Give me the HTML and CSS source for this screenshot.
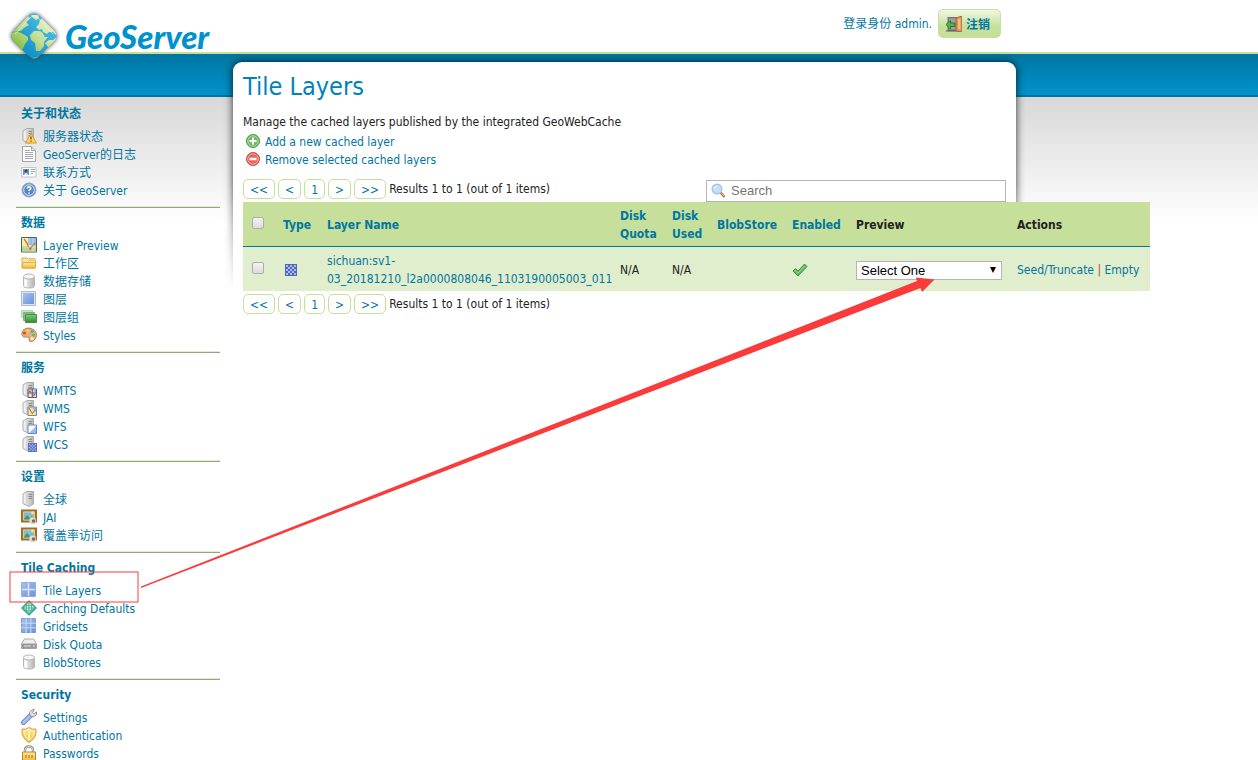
FILE: index.html
```
<!DOCTYPE html>
<html lang="zh-CN">
<head>
<meta charset="utf-8">
<title>GeoServer: Tile Layers</title>
<link rel="stylesheet" href="styles.css">
</head>
<body>
<svg class="sprite" aria-hidden="true">
  <defs>
    <linearGradient id="gray" x1="0" x2="1"><stop offset="0" stop-color="#fafafa"/><stop offset="1" stop-color="#b4b4b4"/></linearGradient>
    <linearGradient id="blue" x1="0" y1="0" x2="1" y2="1"><stop offset="0" stop-color="#a9c2ee"/><stop offset="1" stop-color="#6d92d8"/></linearGradient>
    <linearGradient id="gold" x1="0" y1="0" x2="0" y2="1"><stop offset="0" stop-color="#fdeb9c"/><stop offset="1" stop-color="#eebc3a"/></linearGradient>
    <linearGradient id="green" x1="0" y1="0" x2="0" y2="1"><stop offset="0" stop-color="#86cc7c"/><stop offset="1" stop-color="#2f8a33"/></linearGradient>
    <linearGradient id="land" gradientUnits="userSpaceOnUse" x1="40" y1="8" x2="12" y2="40"><stop offset="0" stop-color="#e6f0c8"/><stop offset=".5" stop-color="#c6e09b"/><stop offset="1" stop-color="#86be3a"/></linearGradient>
    <linearGradient id="sea" gradientUnits="userSpaceOnUse" x1="27" y1="4" x2="27" y2="50"><stop offset="0" stop-color="#53bfe5"/><stop offset="1" stop-color="#078ac2"/></linearGradient>
    <clipPath id="gem"><rect x="9" y="9" width="36" height="36" rx="7" transform="rotate(45 27 27)"/></clipPath>
  </defs>
  <symbol id="server" viewBox="0 0 16 16"><path d="M2 3 6 .5h6.500v12.500L8 15.500 2 12.500z" fill="url(#gray)" stroke="#aaa"/><path d="M6 1v14" stroke="#ccc"/><path d="M7.500 3.500H11M7.500 5.500H11M7.500 7.500H11" stroke="#888"/></symbol>
  <symbol id="status" viewBox="0 0 16 16"><use href="#server"/><path d="M10 5.500 15.500 15h-11z" fill="#ffd765" stroke="#d99b2b"/><path d="M10 8.500v3M10 12.500v1.200" stroke="#76500d" stroke-width="1.300"/></symbol>
  <symbol id="page" viewBox="0 0 16 16"><path d="M1.500.5h9l4 4v11h-13z" fill="#fcfcfc" stroke="#a6a6a6"/><path d="M10.500.5v4h4" fill="#ddd" stroke="#a6a6a6"/><path d="M4 4.500h5M4 6.500h8M4 8.500h8M4 10.500h8M4 12.500h8" stroke="#aaa"/></symbol>
  <symbol id="vcard" viewBox="0 0 16 16"><path d="M.5 3.500h14.500v9.500H.5z" fill="#fff" stroke="#bfc5cb"/><path d="M2 5h6v6H2z" fill="#5e98dc"/><circle cx="5" cy="7" r="1.500" fill="#613b24"/><path d="M3 11q2-4 4 0" fill="#eee"/><path d="M9.500 5.500H14M9.500 7.500H14M9.500 9.500H12" stroke="#8cacce"/></symbol>
  <symbol id="help" viewBox="0 0 16 16"><circle cx="8" cy="8" r="7" fill="#6c93c8" stroke="#89a8d0"/><circle cx="8" cy="8" r="5.300" fill="#5886c3" stroke="#d5e2f3"/><path d="M6.200 6.500q.2-1.700 1.900-1.700 1.800.1 1.700 1.500-.2 1-1.300 1.600-.5.300-.5 1.100M8 10.500v1.300" fill="none" stroke="#fff" stroke-width="1.500"/></symbol>
  <symbol id="map" viewBox="0 0 16 16"><path d="M.5.5h15v14.500H.5z" fill="#f4eea0" stroke="#4f6456"/><path d="M7 1h8v7H7z" fill="#8fbdec"/><path d="M1 9l6 0 8-1v6.500H1z" fill="#b8d594"/><path d="M3 2l3 4 3 7M9 12l5-6" fill="none" stroke="#e14a34" stroke-width="1.200"/><path d="M8 1v13M12 1v13M1 10h14" stroke="#eef4dc" stroke-width=".5"/></symbol>
  <symbol id="folder" viewBox="0 0 16 16"><path d="M1 13V3h5l1.500 2H14.500v8z" fill="#fbe8a1" stroke="#dfac43"/><path d="M1 13 2 7.500h13L14 13z" fill="url(#gold)" stroke="#e0ae44"/><path d="M8 3.500h6.500" stroke="#e5bd62"/></symbol>
  <symbol id="store" viewBox="0 0 16 16"><path d="M2.500 4v8.500q0 2.500 5.500 2.500t5.500-2.500V4" fill="url(#gray)" stroke="#b5b5b5"/><ellipse cx="8" cy="3.500" rx="5.500" ry="2.500" fill="#f6f6f6" stroke="#b5b5b5"/><path d="M5 7v7" stroke="#fff" stroke-width="2"/></symbol>
  <symbol id="layer" viewBox="0 0 16 16"><path d="M.5.500h14v14H.5z" fill="#dfe9fa" stroke="#a5b9e0"/><path d="M2 2h11v11H2z" fill="url(#blue)"/></symbol>
  <symbol id="group" viewBox="0 0 16 16"><path d="M.5 1.500h11v7H.5z" fill="#cce5c7" stroke="#b5d6b3"/><path d="M2.500 3.500h11v8h-11z" fill="#86bd83" stroke="#79b07a"/><path d="M4.500 5.500h11v8h-11z" fill="url(#green)" stroke="#438d47"/></symbol>
  <symbol id="palette" viewBox="0 0 16 16"><path d="M1 8C0 3 5 0 10 1.500S17 8 14 12s-6 3-6 1 1-3-1-3-5 1-6-2z" fill="#e3b27a" stroke="#b97f48"/><circle cx="3.500" cy="6" r="1.600" fill="#e04c36"/><circle cx="7" cy="4" r="1.600" fill="#f0d250"/><circle cx="11" cy="4.500" r="1.600" fill="#5f9fe0"/><circle cx="12.500" cy="8" r="1.500" fill="#72b44f"/><circle cx="11" cy="11.500" r="1.500" fill="#fff3dc"/></symbol>
  <symbol id="wmts" viewBox="0 0 16 16"><use href="#server"/><path d="M7 7h8.500v8.500H7z" fill="#eee99b" stroke="#4a57a8"/><path d="M11 7h4v4z" fill="#8cb4ed"/><path d="M7 11h8.500M11.300 7v8" stroke="#4a57a8"/><path d="M8 9l2 1M12 14l2-2" stroke="#e45133" stroke-width="1.500"/></symbol>
  <symbol id="wms" viewBox="0 0 16 16"><use href="#server"/><path d="M7 7h8.500v8.500H7z" fill="#f1e88c" stroke="#6f82bf"/><path d="M11 7.500h4v5z" fill="#8db6ee"/><path d="M8 8l3 5M11 14l3-4" stroke="#e45133"/></symbol>
  <symbol id="wfs" viewBox="0 0 16 16"><use href="#server"/><path d="M7 7h8.500v8.500H7z" fill="#fff" stroke="#6682cc"/><path d="M15 8v7H8z" fill="#9ebbf0"/></symbol>
  <symbol id="checker" viewBox="0 0 12 12"><path d="M0 0h12v12H0z" fill="#4f66bd"/><path d="M1 2h10M1 6h10M1 10h10" stroke="#a9bdf0" stroke-width="2" stroke-dasharray="2 2"/><path d="M3 4h8M3 8h8" stroke="#a9bdf0" stroke-width="2" stroke-dasharray="2 2"/></symbol>
  <symbol id="wcs" viewBox="0 0 16 16"><use href="#server"/><use href="#checker" x="7" y="7" width="9" height="9"/></symbol>
  <symbol id="jai" viewBox="0 0 16 16"><path d="M1 1.500h14v11H1z" fill="#7dbbeb" stroke="#a56b22" stroke-width="2"/><path d="M2.500 3h11v8h-11z" fill="none" stroke="#e5cb83"/><path d="M3 10l3-4 3 3 2-2 2 3.500H3z" fill="#4b9850"/><circle cx="11.500" cy="4" r="1.400" fill="#ffe569"/><circle cx="11.500" cy="11.500" r="3.300" fill="#ddd" stroke="#bbb" stroke-dasharray="1.500 1"/><circle cx="12.500" cy="12" r="1.700" fill="#8f6534"/></symbol>
  <symbol id="tiles" viewBox="0 0 16 16"><path d="M.5.500h14v14H.5z" fill="url(#blue)" stroke="#95aee0"/><path d="M7.500 1v13M1 7.500h13" stroke="#dce7fb" stroke-width="1.500"/></symbol>
  <symbol id="globe" viewBox="0 0 16 16"><path d="M8 .7 15.500 8 8 15.300.5 8z" fill="#48baa2" stroke="#268a82" stroke-linejoin="round"/><path d="M8 2l5 5-5 6-5-5z" fill="#d9e9ad"/><path d="M5.500 3v10M8 1v14M10.500 3v10M3 5.500h10M1 8h14M3 10.500h10" stroke="#2fb0b4" stroke-width=".7"/></symbol>
  <symbol id="grid" viewBox="0 0 16 16"><path d="M.5.500h14v14H.5z" fill="url(#blue)" stroke="#7c99d5"/><path d="M5.200 0v15M9.800 0v15M0 5.200h15M0 9.800h15" stroke="#c9d8f7"/></symbol>
  <symbol id="disk" viewBox="0 0 16 16"><path d="M3.500 3h9l3 4.500v5H.5v-5z" fill="#eee" stroke="#aaa"/><path d="M1 7.500h14v5H1z" fill="#999"/><path d="M3 10h7" stroke="#ddd"/><path d="M12 10h1.500" stroke="#fff"/></symbol>
  <symbol id="wrench" viewBox="0 0 16 16"><path d="M2.500 13.500 10 6" stroke="#6d8ac6" stroke-width="5" stroke-linecap="round"/><path d="M2.500 13.500 8.500 7.500" stroke="#a8c1ef" stroke-width="3" stroke-linecap="round"/><path d="M9 7 8.500 3.500 11 .8l2.500 0-2 2.500 1.500 1.500 2.500-2v2.700L12.500 8z" fill="#ddd" stroke="#929292"/></symbol>
  <symbol id="shield" viewBox="0 0 16 16"><path d="M1 2q4 1 7-1.500 3 2.500 7 1.500 1 9-7 13.500Q0 11 1 2z" fill="url(#gold)" stroke="#d9a22e"/><path d="M3 4q3 0 5-1.500 2 1.500 5 1.500 0 6-5 9.500Q3 10 3 4z" fill="none" stroke="#fff5c7"/><path d="M8 4v8" stroke="#fff3b0" stroke-width="2"/></symbol>
  <symbol id="lock" viewBox="0 0 16 16"><path d="M4 8V5q0-3.500 4-3.500T12 5v3" fill="none" stroke="#888" stroke-width="2.400"/><path d="M4 8V5q0-3.500 4-3.500T12 5v3" fill="none" stroke="#ddd"/><path d="M1.500 7h13v8.500h-13z" fill="url(#gold)" stroke="#bb842c"/><path d="M4 10h2v3H4zM7 10h2v3H7zM10 10h2v3h-2z" fill="#d89b35"/></symbol>
  <symbol id="add" viewBox="0 0 16 16"><circle cx="8" cy="8" r="6.500" fill="#4fa24b" stroke="#4f9a4c"/><circle cx="8" cy="8" r="5.300" fill="#6fba62" stroke="#b9deb1"/><path d="M8 4.500v7M4.500 8h7" stroke="#fff" stroke-width="2"/></symbol>
  <symbol id="remove" viewBox="0 0 16 16"><circle cx="8" cy="8" r="6.500" fill="#d6423b" stroke="#cf4e48"/><circle cx="8" cy="8" r="5.300" fill="#e8675c" stroke="#f3b7b0"/><path d="M4.500 8h7" stroke="#fff" stroke-width="2.500"/></symbol>
  <symbol id="search" viewBox="0 0 16 16"><path d="M9.500 9.500 13.500 14" stroke="#b87942" stroke-width="2.600"/><path d="M10.500 10.500 13 13" stroke="#e9b47c"/><circle cx="6" cy="6" r="4.800" fill="#c5dff8" stroke="#a9c5e6" stroke-width="1.400"/><path d="M3.500 5.500q.5-2 2.500-2" fill="none" stroke="#fff"/></symbol>
  <symbol id="tick" viewBox="0 0 16 16"><path d="M1 9l2.500-2.500L6 9l6.500-7L15 4.500 6 14z" fill="#66b95f" stroke="#3c8f45" stroke-linejoin="round"/><path d="M3 8.500 6 11l6.500-7" fill="none" stroke="#9cd990"/></symbol>
  <symbol id="door" viewBox="0 0 16 16"><path d="M1.500 1H11v14H1.500z" fill="#777"/><path d="M3 2.500h7v11H3z" fill="#a1a1a1"/><path d="M0 15h11" stroke="#555"/><path d="M10 2l6-2v16l-6-1z" fill="#d9935b" stroke="#a96534"/><path d="M12 3l2.500-.7v11.500L12 13z" fill="#efbd87"/><path d="M0 8.500 4.500 4.500V7H9v3.500H4.500V13z" fill="#55b34c" stroke="#247b2b"/></symbol>
</svg>

<header class="header">
  <div class="wrap header-inner">
    <a class="brand" href="#">
      <svg class="brand-mark" viewBox="0 0 54 54" aria-hidden="true">
        <rect x="9" y="9" width="36" height="36" rx="7" transform="rotate(45 27 27)" fill="url(#sea)"/>
        <g clip-path="url(#gem)" fill="url(#land)">
          <path d="M5 23 20 6l3 3-4 4 3 3-5 3-3 3z"/>
          <path d="M2 26l5-3 5 0 4 2 5 3 0 3-3 4-2 5-3 1z"/>
          <path d="M23 26l4-4 5 0 3 1 3 5 3 0-4 5 0 4-4 5-4 0-1-8-4-3z"/>
          <path d="M29 18l3-3 1-4 4-3 15 16-2 3-4-4-4 0-2 2-4-2-1-3-3 1z"/>
          <path d="M38 34l4-3 4 0 4-3 1 1-9 10zM20 48l5 1 7-1 0 3-6 2zM24 6l7 0 1 3-3 2-3-2z"/>
        </g>
        <path d="M8 25 24 8q3-3 6 0l16 17" fill="none" stroke="#f3fae8" stroke-opacity=".6"/>
      </svg>
      <span class="brand-name">GeoServer</span>
    </a>
    <form class="login">
      <span>登录身份 admin.</span>
      <button class="logout" type="button"><svg class="icon" aria-hidden="true"><use href="#door"/></svg>注销</button>
    </form>
  </div>
</header>
<div class="band"></div>

<div class="backdrop">
  <div class="wrap columns">
    <nav class="sidebar">
      <section class="menu"><h2>关于和状态</h2><ul>
        <li><a href="#"><svg class="icon"><use href="#status"/></svg>服务器状态</a></li>
        <li><a href="#"><svg class="icon"><use href="#page"/></svg>GeoServer的日志</a></li>
        <li><a href="#"><svg class="icon"><use href="#vcard"/></svg>联系方式</a></li>
        <li><a href="#"><svg class="icon"><use href="#help"/></svg>关于 GeoServer</a></li></ul></section>
      <section class="menu"><h2>数据</h2><ul>
        <li><a href="#"><svg class="icon"><use href="#map"/></svg>Layer Preview</a></li>
        <li><a href="#"><svg class="icon"><use href="#folder"/></svg>工作区</a></li>
        <li><a href="#"><svg class="icon"><use href="#store"/></svg>数据存储</a></li>
        <li><a href="#"><svg class="icon"><use href="#layer"/></svg>图层</a></li>
        <li><a href="#"><svg class="icon"><use href="#group"/></svg>图层组</a></li>
        <li><a href="#"><svg class="icon"><use href="#palette"/></svg>Styles</a></li></ul></section>
      <section class="menu"><h2>服务</h2><ul>
        <li><a href="#"><svg class="icon"><use href="#wmts"/></svg>WMTS</a></li>
        <li><a href="#"><svg class="icon"><use href="#wms"/></svg>WMS</a></li>
        <li><a href="#"><svg class="icon"><use href="#wfs"/></svg>WFS</a></li>
        <li><a href="#"><svg class="icon"><use href="#wcs"/></svg>WCS</a></li></ul></section>
      <section class="menu"><h2>设置</h2><ul>
        <li><a href="#"><svg class="icon"><use href="#server"/></svg>全球</a></li>
        <li><a href="#"><svg class="icon"><use href="#jai"/></svg>JAI</a></li>
        <li><a href="#"><svg class="icon"><use href="#jai"/></svg>覆盖率访问</a></li></ul></section>
      <section class="menu"><h2>Tile Caching</h2><ul>
        <li><a href="#"><svg class="icon"><use href="#tiles"/></svg>Tile Layers</a></li>
        <li><a href="#"><svg class="icon"><use href="#globe"/></svg>Caching Defaults</a></li>
        <li><a href="#"><svg class="icon"><use href="#grid"/></svg>Gridsets</a></li>
        <li><a href="#"><svg class="icon"><use href="#disk"/></svg>Disk Quota</a></li>
        <li><a href="#"><svg class="icon"><use href="#store"/></svg>BlobStores</a></li></ul></section>
      <section class="menu"><h2>Security</h2><ul>
        <li><a href="#"><svg class="icon"><use href="#wrench"/></svg>Settings</a></li>
        <li><a href="#"><svg class="icon"><use href="#shield"/></svg>Authentication</a></li>
        <li><a href="#"><svg class="icon"><use href="#lock"/></svg>Passwords</a></li></ul></section>
    </nav>

    <main class="card">
      <h1>Tile Layers</h1>
      <p class="intro">Manage the cached layers published by the integrated GeoWebCache</p>
      <ul class="actions">
        <li><a href="#"><svg class="icon"><use href="#add"/></svg>Add a new cached layer</a></li>
        <li><a href="#"><svg class="icon"><use href="#remove"/></svg>Remove selected cached layers</a></li>
      </ul>
      <div class="toolbar">
        <div class="pager">
          <a href="#">&lt;&lt;</a><a href="#">&lt;</a><a href="#">1</a><a href="#">&gt;</a><a href="#">&gt;&gt;</a>
          <span>Results 1 to 1 (out of 1 items)</span>
        </div>
        <label class="search"><svg class="icon" aria-hidden="true"><use href="#search"/></svg><input type="text" placeholder="Search" aria-label="Search"></label>
      </div>
      <table class="layers">
        <colgroup><col class="c-check"><col class="c-type"><col class="c-name"><col class="c-quota"><col class="c-used"><col class="c-blob"><col class="c-enabled"><col class="c-preview"><col class="c-actions"></colgroup>
        <thead><tr>
          <th><input type="checkbox" aria-label="Select all layers"></th>
          <th><a href="#">Type</a></th><th><a href="#">Layer Name</a></th><th><a href="#">Disk Quota</a></th><th><a href="#">Disk Used</a></th><th><a href="#">BlobStore</a></th><th><a href="#">Enabled</a></th><th>Preview</th><th>Actions</th>
        </tr></thead>
        <tbody><tr>
          <td><input type="checkbox" aria-label="Select layer"></td>
          <td><svg class="type-icon" role="img" aria-label="Raster"><use href="#checker"/></svg></td>
          <td><a href="#">sichuan:sv1-<wbr>03_20181210_l2a0000808046_1103190005003_011</a></td>
          <td>N/A</td><td>N/A</td><td></td>
          <td><svg class="icon" role="img" aria-label="Enabled"><use href="#tick"/></svg></td>
          <td><span class="picker"><select aria-label="Preview"><option>Select One</option></select></span></td>
          <td class="ops"><a href="#">Seed/Truncate</a> | <a href="#">Empty</a></td>
        </tr></tbody>
      </table>
      <div class="pager pager-bottom">
        <a href="#">&lt;&lt;</a><a href="#">&lt;</a><a href="#">1</a><a href="#">&gt;</a><a href="#">&gt;&gt;</a>
        <span>Results 1 to 1 (out of 1 items)</span>
      </div>
    </main>
  </div>
</div>

<svg class="annotation" width="940" height="610" viewBox="0 0 940 610" aria-hidden="true">
  <rect x="10" y="572" width="128" height="30" fill="none" stroke="#fb3a3a"/>
  <path d="M141 586.500 917 281l-1-3.500 18.500 2L922 292l-1.500-4L141 588z" fill="#fb3a3a"/>
</svg>
</body>
</html>
```
FILE: styles.css
```
* { box-sizing: border-box; }

body {
  margin: 0;
  position: relative;
  background: #fff;
  color: #222;
  font: 12px/18px "DejaVu Sans Condensed", "Noto Sans", "Noto Sans CJK SC", sans-serif;
}

a { color: #0076a1; text-decoration: none; }
ul { list-style: none; margin: 0; padding: 0; }
.sprite { position: absolute; width: 0; height: 0; }
.icon { width: 16px; height: 16px; flex: none; }
.wrap { max-width: 1016px; }

.header { height: 54px; border-bottom: 2px solid #c6e09b; }
.header-inner {
  display: flex;
  justify-content: space-between;
  align-items: flex-start;
  padding: 9px 15px 0 7px;
}
.brand { display: flex; align-items: flex-start; gap: 4px; position: relative; z-index: 2; }
.brand-mark { width: 54px; height: 54px; filter: drop-shadow(0 0 2px #444); }
.brand-name {
  color: #0092cc;
  font: italic 900 33px/54px Lato, sans-serif;
}
.login { display: flex; align-items: center; gap: 6px; color: #0076a1; }
.logout {
  display: flex;
  align-items: center;
  gap: 4px;
  height: 29px;
  padding: 0 10px 0 7px;
  border: 1px solid #c6e09b;
  border-radius: 5px;
  background: linear-gradient(#f0f7e3, #c6e09b 60%);
  color: #0076a1;
  font: bold 12px/18px "Noto Sans CJK SC", sans-serif;
}

.band {
  height: 43px;
  border-bottom: 2px solid #0076a1;
  background: linear-gradient(#0076a1, #0092cc);
}
.backdrop { background: linear-gradient(#d8d8d8, #fff 125px); }
.columns { display: flex; align-items: flex-start; gap: 13px; padding-left: 16px; }

.sidebar { flex: none; width: 204px; padding-top: 3px; }
.menu {
  padding: 5px 5px 7px;
  border-bottom: 1px solid #93a581;
  box-shadow: inset 0 -1px #e1eecd;
  margin-bottom: 1px;
}
.menu:last-child { padding-bottom: 0; margin: 0; border: 0; box-shadow: none; }
.menu h2 { margin: 0 0 5px; color: #0076a1; font-size: 12px; line-height: 18px; }
.menu a { display: flex; gap: 6px; height: 18px; }

.card {
  position: relative;
  z-index: 1;
  flex: 1;
  min-width: 0;
  margin-top: -35px;
  padding: 10px;
}
/* Panel whose shadow fades out down its sides */
.card::before {
  content: "";
  position: absolute;
  z-index: -1;
  inset: -12px -12px auto;
  height: 228px;
  border: 12px solid transparent;
  border-bottom: 0;
  border-radius: 21px 21px 0 0;
  background: #fff padding-box;
  filter: drop-shadow(0 0 4px #000c);
  -webkit-mask-image: linear-gradient(#000 55%, transparent);
  mask-image: linear-gradient(#000 55%, transparent);
}
.card h1 { margin: 0; color: #0083bb; font-size: 25px; font-weight: 400; line-height: 30px; }
.intro { margin: 11px 0 2px; }
.actions { padding-left: 2px; }
.actions a { display: flex; gap: 4px; }

.toolbar { display: flex; justify-content: space-between; align-items: flex-end; height: 33px; }
.toolbar .pager { padding-bottom: 3px; }
.pager { display: flex; gap: 3px; line-height: 20px; }
.pager a {
  height: 20px;
  padding: 0 6px;
  border: 1px solid #c6e09b;
  border-radius: 5px;
  background: #fff;
}
.pager-bottom { padding-top: 3px; }
.search {
  display: flex;
  align-items: center;
  gap: 4px;
  width: 300px;
  height: 22px;
  padding: 0 4px;
  border: 1px solid #b5b5b5;
  background: #fff;
}
.search input {
  flex: 1;
  min-width: 0;
  padding: 0;
  border: 0;
  font: 13px/18px "Liberation Sans", sans-serif;
}
.search input::placeholder { color: #757575; }

.layers {
  width: 907px;
  table-layout: fixed;
  border-collapse: collapse;
  background: #e1eecd;
}
.layers th, .layers td { height: 44px; padding: 5px 0 3px 10px; text-align: left; }
.layers th { background: #c6e09b; }
.layers thead { border-bottom: 1px solid #0076a1; }
.layers svg { display: block; }
.layers th:first-child, .layers td:first-child { padding: 3px 0 5px 9px; }
.layers input {
  display: block;
  appearance: none;
  width: 12px;
  height: 12px;
  margin: 0;
  border: 1px solid #adadad;
  border-radius: 2px;
  background: linear-gradient(#f2f2f2, #dcdcdc);
}
.type-icon { width: 12px; height: 12px; margin-left: 2px; }
.ops { color: #a0522d; white-space: nowrap; }
.c-check { width: 30px; }
.c-type { width: 44px; }
.c-name { width: 293px; }
.c-quota { width: 52px; }
.c-used { width: 45px; }
.c-blob { width: 75px; }
.c-enabled { width: 64px; }
.c-preview { width: 161px; }
.c-actions { width: 143px; }

.picker { display: block; position: relative; width: 146px; }
.picker select {
  display: block;
  appearance: none;
  width: 100%;
  height: 19px;
  padding: 0 4px;
  border: 1px solid #b5b5b5;
  border-radius: 0;
  background: #fff;
  color: #000;
  font: 13px/17px "Liberation Sans", sans-serif;
}
.picker::after {
  content: "";
  position: absolute;
  top: 6px;
  right: 6px;
  border: 3px solid transparent;
  border-top: 6px solid #000;
  border-bottom: 0;
  pointer-events: none;
}

.annotation { position: absolute; z-index: 3; top: 0; left: 0; pointer-events: none; }
```
